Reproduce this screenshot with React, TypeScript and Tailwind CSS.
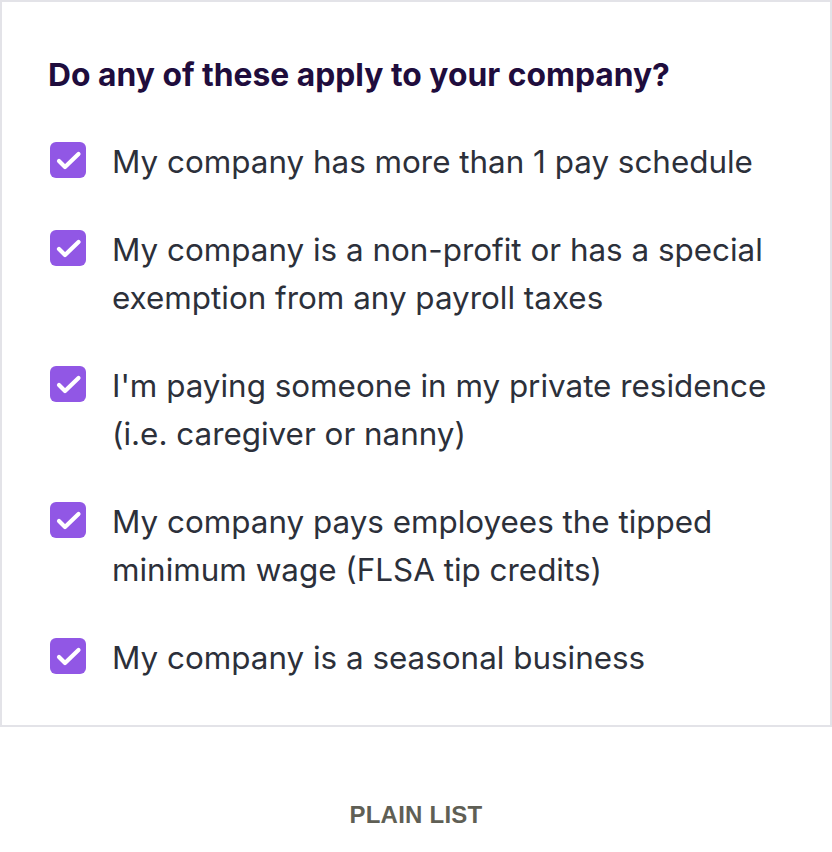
const options = [
    'My company has more than 1 pay schedule',
    'My company is a non-profit or has a special exemption from any payroll taxes',
    "I'm paying someone in my private residence (i.e. caregiver or nanny)",
    'My company pays employees the tipped minimum wage (FLSA tip credits)',
    'My company is a seasonal business',
];

const CheckItem = ({ label }: { label: string }) => (
    <label className="flex items-start gap-[26px]">
        <span className="mt-[4px] ml-[2px] w-9 h-9 shrink-0 rounded-[6px] bg-[#9157e5]">
            <svg viewBox="0 0 36 36" className="w-9 h-9" fill="none" stroke="white" strokeWidth={4.2} strokeLinecap="round" strokeLinejoin="round">
                <path d="M9 19 L15 25 L28.5 12" />
            </svg>
        </span>
        <span className="text-[31.4px] leading-[48px] text-[#2c303a] pr-4">{label}</span>
    </label>
);

export default function App() {
    return (
        <div className="w-[832px] h-[852px] bg-white flex flex-col" style={{ fontFamily: 'Inter, "Open Sans", sans-serif' }}>
            {/* Question card */}
            <div className="h-[727px] border-2 border-[#e3e3e8] pt-[55px] pl-[46px] pr-2">
                <h2 className="text-[31.8px] leading-9 font-bold text-[#1f0d3d]">
                    Do any of these apply to your company?
                </h2>
                <div className="mt-[45px] flex flex-col gap-10">
                    {options.map((o) => (
                        <CheckItem key={o} label={o} />
                    ))}
                </div>
            </div>

            <div className="flex justify-center pt-[74px]">
                <span className="text-[24px] leading-7 font-bold tracking-[0.01em] text-[#5f5f55]" style={{ fontFamily: '"Liberation Sans", Arial, sans-serif' }}>
                    PLAIN LIST
                </span>
            </div>
        </div>
    );
}
